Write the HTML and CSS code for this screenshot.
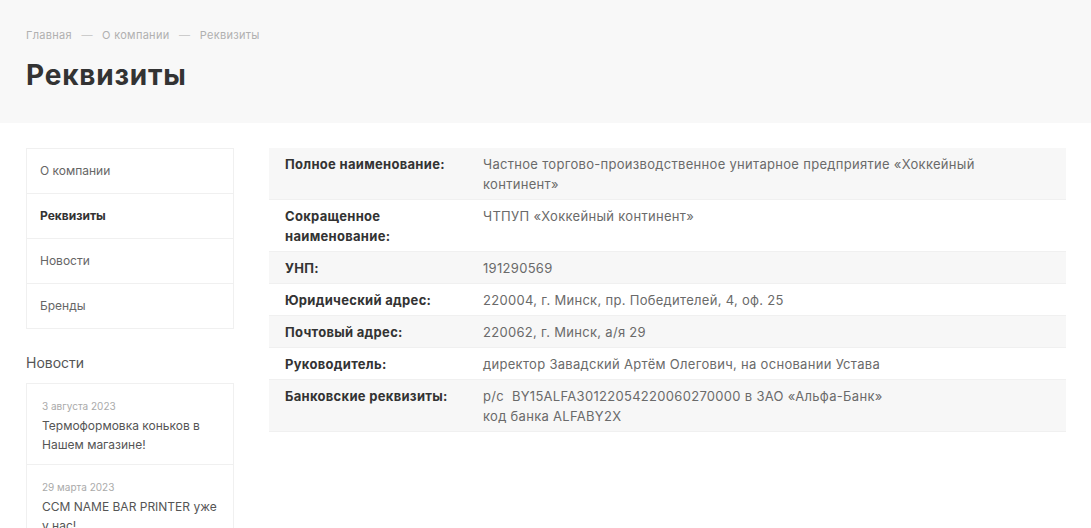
FILE: index.html
```
<!DOCTYPE html>
<html lang="ru">
<head>
    <meta charset="UTF-8">
    <meta name="viewport" content="width=device-width, initial-scale=1.0">
    <title>Реквизиты</title>
    <link rel="stylesheet" href="styles.css">
</head>
<body>
    <div class="page-top">
        <div class="breadcrumbs">
            <a href="#">Главная</a>
            <span class="sep">—</span>
            <a href="#">О компании</a>
            <span class="sep">—</span>
            <span>Реквизиты</span>
        </div>
        <h1>Реквизиты</h1>
    </div>

    <div class="content">
        <div class="sidebar">
            <ul class="side-menu">
                <li><a href="#">О компании</a></li>
                <li class="active"><a href="#">Реквизиты</a></li>
                <li><a href="#">Новости</a></li>
                <li><a href="#">Бренды</a></li>
            </ul>

            <div class="side-title">Новости</div>
            <div class="news-list">
                <div class="news-item">
                    <div class="news-date">3 августа 2023</div>
                    <a href="#" class="news-name">Термоформовка коньков в Нашем магазине!</a>
                </div>
                <div class="news-item">
                    <div class="news-date">29 марта 2023</div>
                    <a href="#" class="news-name">CCM NAME BAR PRINTER уже у нас!</a>
                </div>
            </div>
        </div>

        <div class="main">
            <table class="props">
                <tr>
                    <td class="label">Полное наименование:</td>
                    <td>Частное торгово-производственное унитарное предприятие «Хоккейный континент»</td>
                </tr>
                <tr>
                    <td class="label">Сокращенное наименование:</td>
                    <td>ЧТПУП «Хоккейный континент»</td>
                </tr>
                <tr>
                    <td class="label">УНП:</td>
                    <td>191290569</td>
                </tr>
                <tr>
                    <td class="label">Юридический адрес:</td>
                    <td>220004, г. Минск, пр. Победителей, 4, оф. 25</td>
                </tr>
                <tr>
                    <td class="label">Почтовый адрес:</td>
                    <td>220062, г. Минск, а/я 29</td>
                </tr>
                <tr>
                    <td class="label">Руководитель:</td>
                    <td>директор Завадский Артём Олегович, на основании Устава</td>
                </tr>
                <tr>
                    <td class="label">Банковские реквизиты:</td>
                    <td>р/с&nbsp; BY15ALFA30122054220060270000 в ЗАО «Альфа-Банк»<br>код банка ALFABY2X</td>
                </tr>
            </table>
        </div>
    </div>
</body>
</html>
```

FILE: styles.css
```
body {
    font-family: Inter, "Noto Sans", Arial, sans-serif;
    margin: 0;
    padding: 0;
    background-color: #fff;
    color: #333;
}
a {
    color: inherit;
    text-decoration: none;
}
.page-top {
    height: 123px;
    box-sizing: border-box;
    padding: 28px 26px 0;
    background-color: #f8f8f8;
}
.breadcrumbs {
    font-size: 11px;
    line-height: 14px;
    letter-spacing: 0.3px;
    color: #b0b0b0;
}
.breadcrumbs .sep {
    margin: 0 6px;
    color: #ccc;
}
.page-top h1 {
    margin: 17px 0 0;
    font-size: 28px;
    line-height: 32px;
    font-weight: 700;
    letter-spacing: 0.8px;
    color: #333;
}
.content {
    display: flex;
    gap: 35px;
    padding: 25px 25px 0 26px;
}
.sidebar {
    width: 208px;
    flex-shrink: 0;
}
.side-menu {
    list-style: none;
    margin: 0;
    padding: 0;
    border: 1px solid #f0f0f0;
}
.side-menu li {
    border-top: 1px solid #f0f0f0;
}
.side-menu li:first-child {
    border-top: none;
}
.side-menu a {
    display: block;
    height: 44px;
    line-height: 44px;
    padding: 0 13px;
    font-size: 12px;
    color: #666;
}
.side-menu .active a {
    font-weight: 700;
    color: #333;
}
.side-title {
    margin: 24px 0 10px;
    font-size: 14px;
    line-height: 20px;
    color: #555;
}
.news-list {
    border: 1px solid #f0f0f0;
}
.news-item {
    padding: 15px 15px 10px;
    border-top: 1px solid #f0f0f0;
}
.news-item:first-child {
    border-top: none;
}
.news-date {
    font-size: 10px;
    line-height: 14px;
    color: #aaa;
}
.news-name {
    display: block;
    margin-top: 3px;
    font-size: 12px;
    line-height: 19px;
    color: #555;
}
.main {
    flex: 1;
}
.props {
    width: 100%;
    table-layout: fixed;
    border-collapse: collapse;
    font-size: 13px;
    line-height: 20px;
    letter-spacing: 0.3px;
}
.props tr {
    border-bottom: 1px solid #f0f0f0;
}
.props tr:nth-child(odd) {
    background-color: #f7f7f7;
}
.props td {
    padding: 6px 16px 5px 0;
    vertical-align: top;
    color: #6a6a6a;
}
.props td.label {
    width: 184px;
    padding-left: 16px;
    padding-right: 14px;
    font-weight: 700;
    color: #333;
}
```
